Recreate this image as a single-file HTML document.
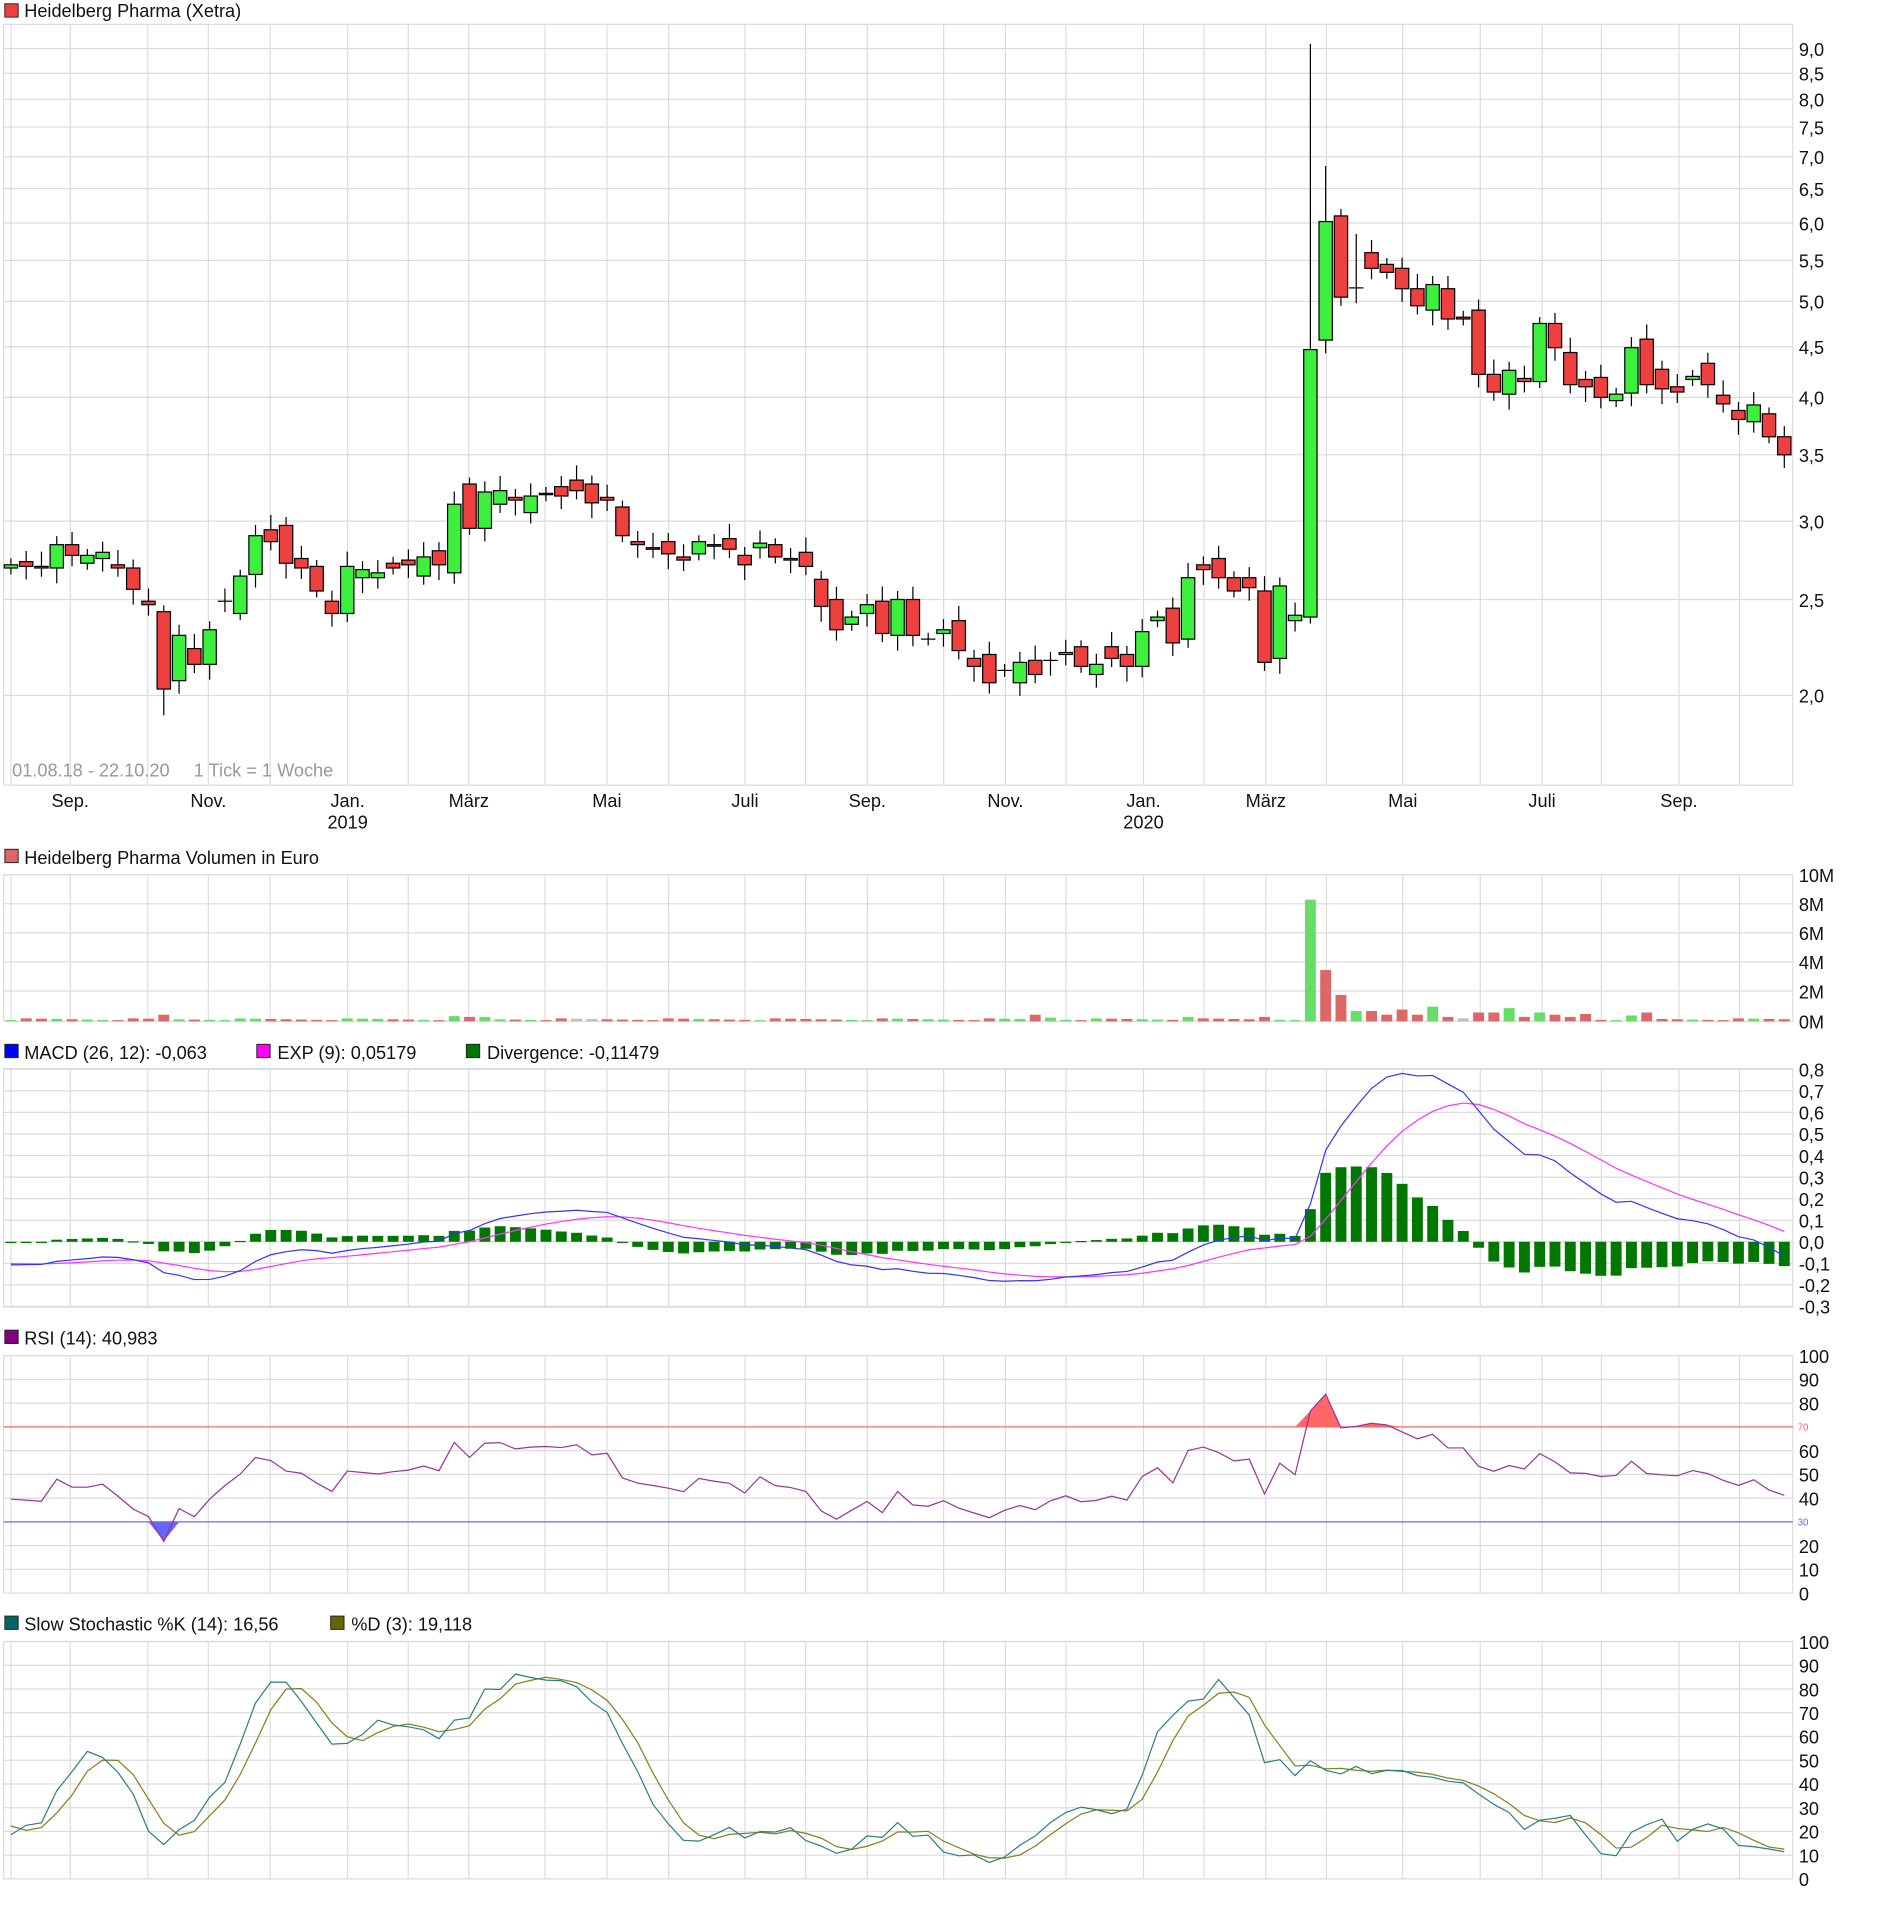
<!DOCTYPE html>
<html><head><meta charset="utf-8"><style>
html,body{margin:0;padding:0;background:#fff;}
svg{display:block;}
text{font-family:"Liberation Sans",sans-serif;}
</style></head><body>
<svg id="s" xmlns="http://www.w3.org/2000/svg" width="1880" height="1913" viewBox="0 0 1552 1579">
<rect width="1552" height="1579" fill="#fff"/>
<g id="g"></g>
<rect x="4" y="3" width="11" height="11" fill="#ef4040" stroke="#222" stroke-width="0.8"/>
<text x="20" y="14" font-size="15" fill="#111">Heidelberg Pharma (Xetra)</text>
<text x="10" y="641" font-size="15" fill="#999">01.08.18 - 22.10.20</text>
<text x="160" y="641" font-size="15" fill="#999">1 Tick = 1 Woche</text>
<rect x="4" y="701" width="11" height="11" fill="#dd6666" stroke="#222" stroke-width="0.8"/>
<text x="20" y="713" font-size="15" fill="#111">Heidelberg Pharma Volumen in Euro</text>
<rect x="4" y="862" width="11" height="11" fill="#0000ff" stroke="#222" stroke-width="0.8"/>
<text x="20" y="874" font-size="15" fill="#111">MACD (26, 12): -0,063</text>
<rect x="212" y="862" width="11" height="11" fill="#ff00ff" stroke="#222" stroke-width="0.8"/>
<text x="229" y="874" font-size="15" fill="#111">EXP (9): 0,05179</text>
<rect x="385" y="862" width="11" height="11" fill="#007700" stroke="#222" stroke-width="0.8"/>
<text x="402" y="874" font-size="15" fill="#111">Divergence: -0,11479</text>
<rect x="4" y="1098" width="11" height="11" fill="#800080" stroke="#222" stroke-width="0.8"/>
<text x="20" y="1110" font-size="15" fill="#111">RSI (14): 40,983</text>
<rect x="4" y="1334" width="11" height="11" fill="#006666" stroke="#222" stroke-width="0.8"/>
<text x="20" y="1346" font-size="15" fill="#111">Slow Stochastic %K (14): 16,56</text>
<rect x="273" y="1334" width="11" height="11" fill="#666600" stroke="#222" stroke-width="0.8"/>
<text x="290" y="1346" font-size="15" fill="#111">%D (3): 19,118</text>
</svg>
<script>
var NS="http://www.w3.org/2000/svg",G=document.getElementById('g');
function el(t,a,txt){var e=document.createElementNS(NS,t);for(var k in a)e.setAttribute(k,a[k]);if(txt!=null)e.textContent=txt;G.appendChild(e);return e;}
var OC=[[2.69,2.71],[2.73,2.70],[2.70,2.69],[2.69,2.84],[2.84,2.77],[2.72,2.77],[2.75,2.79],[2.71,2.69],[2.69,2.56],[2.49,2.47],[2.43,2.03],[2.07,2.30],[2.23,2.15],[2.15,2.33],[2.49,2.49],[2.42,2.64],[2.65,2.90],[2.94,2.86],[2.97,2.72],[2.75,2.69],[2.70,2.55],[2.49,2.42],[2.42,2.70],[2.63,2.68],[2.63,2.66],[2.72,2.69],[2.74,2.71],[2.64,2.76],[2.80,2.71],[2.66,3.12],[3.27,2.95],[2.95,3.21],[3.12,3.22],[3.17,3.15],[3.06,3.18],[3.20,3.19],[3.25,3.18],[3.30,3.22],[3.27,3.13],[3.17,3.15],[3.10,2.90],[2.86,2.84],[2.82,2.81],[2.86,2.78],[2.76,2.74],[2.78,2.86],[2.84,2.83],[2.88,2.81],[2.77,2.71],[2.82,2.85],[2.84,2.76],[2.75,2.74],[2.79,2.70],[2.62,2.46],[2.50,2.33],[2.36,2.40],[2.42,2.47],[2.49,2.31],[2.30,2.50],[2.50,2.30],[2.28,2.28],[2.31,2.33],[2.38,2.22],[2.18,2.14],[2.20,2.06],[2.12,2.12],[2.06,2.16],[2.17,2.10],[2.17,2.17],[2.20,2.21],[2.24,2.14],[2.10,2.15],[2.24,2.18],[2.20,2.14],[2.14,2.32],[2.38,2.40],[2.45,2.26],[2.28,2.63],[2.71,2.68],[2.75,2.63],[2.63,2.55],[2.63,2.57],[2.55,2.16],[2.18,2.58],[2.38,2.41],[2.40,4.47],[4.57,6.02],[6.10,5.05],[5.16,5.16],[5.60,5.40],[5.45,5.35],[5.40,5.15],[5.15,4.95],[4.90,5.20],[5.15,4.80],[4.82,4.80],[4.90,4.22],[4.22,4.05],[4.03,4.26],[4.18,4.15],[4.15,4.75],[4.75,4.49],[4.44,4.12],[4.17,4.10],[4.19,4.00],[3.97,4.03],[4.04,4.49],[4.58,4.12],[4.27,4.08],[4.10,4.05],[4.17,4.20],[4.33,4.12],[4.02,3.94],[3.88,3.80],[3.78,3.93],[3.85,3.65],[3.65,3.50]];
var n=OC.length,X0=9,DX=(1473-9)/(n-1);
function X(i){return X0+i*DX;}
var H=[],L=[],C=[];
for(var i=0;i<n;i++){var o=OC[i][0],c=OC[i][1];var mx=Math.max(o,c),mn=Math.min(o,c);
var h=mx*(1+0.015+0.02*((i*7)%5)/4),l=mn*(1-0.015-0.02*((i*3)%5)/4);
if(i==85)h=9.1;if(i==86)h=6.85;if(i==10)l=1.91;if(i==87)h=6.2;if(i==88)h=5.85;
H.push(h);L.push(l);C.push(c);}
var xs=[9,58,122,172,223,287,337,387,450,501,552,615,665,716,779,830,880,944,994,1045,1095,1158,1222,1273,1322,1386,1436];
var RX=1480;
function grid(top,bot,ys){
 for(var k=0;k<xs.length;k++)el('line',{x1:xs[k],x2:xs[k],y1:top,y2:bot,stroke:'#dcdcdc','stroke-width':1});
 for(var k=0;k<ys.length;k++)el('line',{x1:3,x2:RX,y1:ys[k],y2:ys[k],stroke:'#dcdcdc','stroke-width':1});
 el('line',{x1:3,x2:RX,y1:top,y2:top,stroke:'#dcdcdc'});el('line',{x1:3,x2:RX,y1:bot,y2:bot,stroke:'#dcdcdc'});
 el('line',{x1:3,x2:3,y1:top,y2:bot,stroke:'#dcdcdc'});el('line',{x1:RX,x2:RX,y1:top,y2:bot,stroke:'#dcdcdc'});
}
function lab(x,y,t,sz,col){el('text',{x:x,y:y,'font-size':sz||15,fill:col||'#111'},t);}
function PY(p){return 574-355*Math.log(p/2);}
var pl=[2,2.5,3,3.5,4,4.5,5,5.5,6,6.5,7,7.5,8,8.5,9],pys=pl.map(PY);
grid(20,648,pys);
pl.forEach(function(p){lab(1485,PY(p)+6,p.toFixed(1).replace('.',','));});
var ml=[[58,'Sep.'],[172,'Nov.'],[287,'Jan.'],[387,'März'],[501,'Mai'],[615,'Juli'],[716,'Sep.'],[830,'Nov.'],[944,'Jan.'],[1045,'März'],[1158,'Mai'],[1273,'Juli'],[1386,'Sep.']];
ml.forEach(function(m){el('text',{x:m[0],y:666,'font-size':15,fill:'#111','text-anchor':'middle'},m[1]);});
el('text',{x:287,y:684,'font-size':15,fill:'#111','text-anchor':'middle'},'2019');
el('text',{x:944,y:684,'font-size':15,fill:'#111','text-anchor':'middle'},'2020');
for(var i=0;i<n;i++){var o=OC[i][0],c=OC[i][1],x=X(i);
 el('line',{x1:x,x2:x,y1:PY(H[i]),y2:PY(L[i]),stroke:'#000','stroke-width':1});
 var t=PY(Math.max(o,c)),b=PY(Math.min(o,c));
 if(Math.abs(o-c)<0.005){el('line',{x1:x-6,x2:x+6,y1:t,y2:t,stroke:'#000','stroke-width':1});}
 else el('rect',{x:x-5.5,y:t,width:11,height:Math.max(b-t,1),fill:c>o?'#3ef03e':'#ef4040',stroke:'#000','stroke-width':1});
}
var VB=843,VS=121/10;
var vys=[722,746,770,794,818,843];grid(722,843,vys);
['10M','8M','6M','4M','2M','0M'].forEach(function(t,k){lab(1485,vys[k]+6,t);});
var spec={10:0.45,29:0.35,30:0.3,31:0.3,82:0.3,85:8.3,86:3.5,87:1.8,88:0.7,89:0.7,90:0.45,91:0.8,92:0.45,93:1.0,94:0.3,95:0.2,96:0.6,97:0.6,98:0.9,99:0.3,100:0.6,101:0.45,102:0.3,103:0.5,106:0.4,107:0.6,77:0.3,67:0.45,68:0.25};
for(var i=0;i<n;i++){var v=spec[i]!=null?spec[i]:0.08+0.12*((i*13)%7)/6;var up=OC[i][1]>=OC[i][0];
 var col=(i==37||i==38||i==95)?'#c0c0c0':(up?'#66dd66':'#dd6666');if(i==86)col='#dd6666';
 el('rect',{x:X(i)-4.5,y:VB-v*VS,width:9,height:v*VS,fill:col});}
function ema(a,p){var k=2/(p+1),r=[],e=a[0];for(var i=0;i<a.length;i++){e=i==0?a[0]:a[i]*k+e*(1-k);r.push(e);}return r;}
var pre=[];for(var i=0;i<40;i++)pre.push(3.35-0.63*i/39+0.09*Math.sin(i*1.6));
var P=pre.length;
var CC=pre.concat(C);
var e12=ema(CC,12),e26=ema(CC,26),macd=e12.map(function(v,i){return v-e26[i];}),sig=ema(macd,9);
macd=macd.slice(P);sig=sig.slice(P);
function MY(v){return 1025-v*178;}
var mys=[];for(var k=8;k>=-3;k--)mys.push(MY(k/10));
grid(882,1079,mys);
for(var k=8;k>=-3;k--)lab(1485,MY(k/10)+6,(k/10).toFixed(1).replace('.',','));
for(var i=0;i<n;i++){var d=macd[i]-sig[i];var y1=MY(Math.max(d,0)),y2=MY(Math.min(d,0));
 el('rect',{x:X(i)-4.5,y:y1,width:9,height:Math.max(y2-y1,1),fill:'#007700'});}
function poly(arr,f,col,w){var p=[];for(var i=0;i<arr.length;i++)p.push(X(i).toFixed(1)+','+f(arr[i]).toFixed(1));el('polyline',{points:p.join(' '),fill:'none',stroke:col,'stroke-width':w||1});}
poly(sig,MY,'#ff33ff');poly(macd,MY,'#3333ff');
var rsi=[],ag=0,al=0;var full=CC;
for(var i=1;i<full.length;i++){var ch=full[i]-full[i-1],g=Math.max(ch,0),l=Math.max(-ch,0);
 if(i<=14){ag+=g/14;al+=l/14;}else{ag=(ag*13+g)/14;al=(al*13+l)/14;}
 rsi.push(al==0?100:100-100/(1+ag/al));}
rsi=rsi.slice(P-1);
function RY(v){return 1315-v*1.96;}
var rys=[];for(var k=0;k<=100;k+=10)if(k!=70&&k!=30)rys.push(RY(k));
grid(1119,1315,rys);
[100,90,80,60,50,40,20,10,0].forEach(function(k){lab(1485,RY(k)+6,''+k);});
el('line',{x1:3,x2:RX,y1:RY(70),y2:RY(70),stroke:'#ff6666'});
el('line',{x1:3,x2:RX,y1:RY(30),y2:RY(30),stroke:'#6666ff'});
lab(1484,RY(70)+3,'70',8,'#ff6666');lab(1484,RY(30)+3,'30',8,'#6666ff');
var pa=[X(0)+','+RY(70)],pb=[X(0)+','+RY(30)];
for(var i=0;i<n;i++){pa.push(X(i)+','+RY(Math.max(rsi[i],70)));pb.push(X(i)+','+RY(Math.min(rsi[i],30)));}
pa.push(X(n-1)+','+RY(70));pb.push(X(n-1)+','+RY(30));
el('polygon',{points:pa.join(' '),fill:'#ff6666'});el('polygon',{points:pb.join(' '),fill:'#6666ff'});
poly(rsi,RY,'#993399');
var HH=pre.map(function(v){return v*1.02;}).concat(H),LL=pre.map(function(v){return v*0.98;}).concat(L);
var raw=[];for(var i=0;i<CC.length;i++){var hh=-1e9,ll=1e9;for(var j=Math.max(0,i-13);j<=i;j++){hh=Math.max(hh,HH[j]);ll=Math.min(ll,LL[j]);}raw.push(100*(CC[i]-ll)/(hh-ll));}
function sma(a,p){return a.map(function(v,i){var s=0,c=0;for(var j=Math.max(0,i-p+1);j<=i;j++){s+=a[j];c++;}return s/c;});}
var K=sma(raw,3),D=sma(K,3);K=K.slice(P);D=D.slice(P);
function SY(v){return 1551-v*1.96;}
var sys=[];for(var k=0;k<=100;k+=10)sys.push(SY(k));
grid(1355,1551,sys);
for(var k=100;k>=0;k-=10)lab(1485,SY(k)+6,''+k);
poly(D,SY,'#808020');poly(K,SY,'#2a8080');
</script>
</body></html>
